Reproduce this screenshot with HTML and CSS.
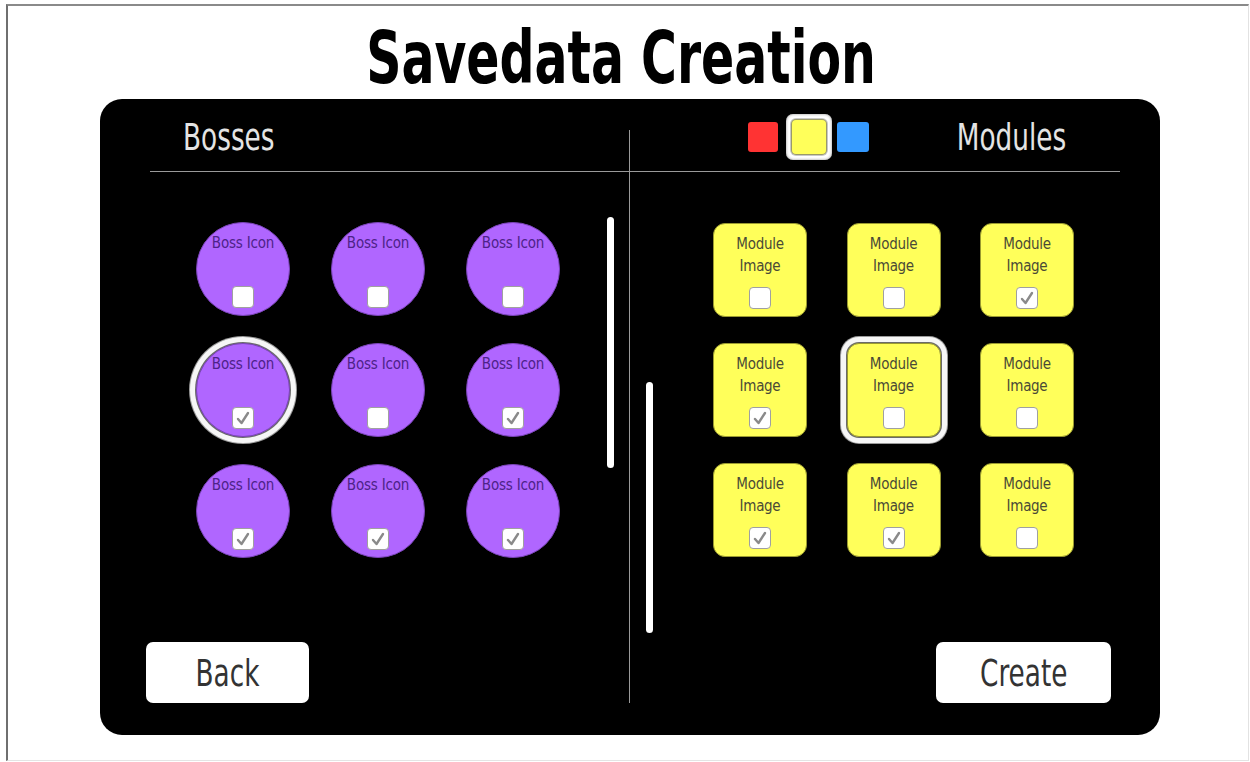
FILE: index.html
```html
<!DOCTYPE html>
<html>
<head>
  <title>Savedata Creation</title>
  <link rel="stylesheet" href="styles.css">
</head>
<body>
  <div class="frame">
    <h1><span class="narrow title-text">Savedata Creation</span></h1>

    <div class="panel">
      <!-- Bosses column -->
      <div class="column column-left">
        <div class="column-head head-left">
          <span class="head-label narrow">Bosses</span>
        </div>
        <div class="column-body">
          <div class="boss-grid">
            <div class="boss"><span class="boss-label">Boss Icon</span><span class="check"></span></div>
            <div class="boss"><span class="boss-label">Boss Icon</span><span class="check"></span></div>
            <div class="boss"><span class="boss-label">Boss Icon</span><span class="check"></span></div>
            <div class="boss selected"><span class="boss-label">Boss Icon</span><span class="check checked"><svg viewBox="0 0 20 20"><path d="M5 11 L8.5 15 L15 5"/></svg></span></div>
            <div class="boss"><span class="boss-label">Boss Icon</span><span class="check"></span></div>
            <div class="boss"><span class="boss-label">Boss Icon</span><span class="check checked"><svg viewBox="0 0 20 20"><path d="M5 11 L8.5 15 L15 5"/></svg></span></div>
            <div class="boss"><span class="boss-label">Boss Icon</span><span class="check checked"><svg viewBox="0 0 20 20"><path d="M5 11 L8.5 15 L15 5"/></svg></span></div>
            <div class="boss"><span class="boss-label">Boss Icon</span><span class="check checked"><svg viewBox="0 0 20 20"><path d="M5 11 L8.5 15 L15 5"/></svg></span></div>
            <div class="boss"><span class="boss-label">Boss Icon</span><span class="check checked"><svg viewBox="0 0 20 20"><path d="M5 11 L8.5 15 L15 5"/></svg></span></div>
          </div>
          <div class="scrollbar scroll-left"></div>
        </div>
        <div class="column-foot">
          <button class="action back-button"><span class="narrow">Back</span></button>
        </div>
      </div>

      <div class="divider"></div>

      <!-- Modules column -->
      <div class="column column-right">
        <div class="column-head head-right">
          <div class="swatches">
            <span class="swatch red"></span>
            <span class="swatch-wrap"><span class="swatch yellow"></span></span>
            <span class="swatch blue"></span>
          </div>
          <span class="head-label narrow">Modules</span>
        </div>
        <div class="column-body">
          <div class="scrollbar scroll-right"></div>
          <div class="module-grid">
            <div class="module"><span class="module-label">Module<br>Image</span><span class="check"></span></div>
            <div class="module"><span class="module-label">Module<br>Image</span><span class="check"></span></div>
            <div class="module"><span class="module-label">Module<br>Image</span><span class="check checked"><svg viewBox="0 0 20 20"><path d="M5 11 L8.5 15 L15 5"/></svg></span></div>
            <div class="module"><span class="module-label">Module<br>Image</span><span class="check checked"><svg viewBox="0 0 20 20"><path d="M5 11 L8.5 15 L15 5"/></svg></span></div>
            <div class="module selected"><span class="module-label">Module<br>Image</span><span class="check"></span></div>
            <div class="module"><span class="module-label">Module<br>Image</span><span class="check"></span></div>
            <div class="module"><span class="module-label">Module<br>Image</span><span class="check checked"><svg viewBox="0 0 20 20"><path d="M5 11 L8.5 15 L15 5"/></svg></span></div>
            <div class="module"><span class="module-label">Module<br>Image</span><span class="check checked"><svg viewBox="0 0 20 20"><path d="M5 11 L8.5 15 L15 5"/></svg></span></div>
            <div class="module"><span class="module-label">Module<br>Image</span><span class="check"></span></div>
          </div>
        </div>
        <div class="column-foot foot-right">
          <button class="action create-button"><span class="narrow">Create</span></button>
        </div>
      </div>
    </div>
  </div>
</body>
</html>
```

FILE: styles.css
```css
html,
body {
  margin: 0;
  padding: 0;
  background-color: #FFFFFF;
  font-family: "DejaVu Sans Condensed", "DejaVu Sans", sans-serif;
}

.frame {
  box-sizing: border-box;
  width: 1243px;
  height: 757px;
  margin: 4px 0 0 6px;
  border-top: 2px solid #8a8a8a;
  border-left: 2px solid #6f6f6f;
  border-right: 1px solid #e2e2e2;
  border-bottom: 1px solid #e4e4e4;
  display: flex;
  flex-direction: column;
}

/* squeezes the wide fallback font down to the narrow face of the design */
.narrow {
  display: inline-block;
  transform: scaleX(0.77);
}

h1 {
  margin: 0;
  padding-right: 13px;
  height: 93px;
  line-height: 104px;
  text-align: center;
  font-size: 73px;
  font-weight: bold;
  color: #000000;
  white-space: nowrap;
}

.title-text {
  transform: scaleX(0.745);
}

.panel {
  width: 1060px;
  height: 636px;
  margin-left: 92px;
  background-color: #000000;
  border-radius: 22px;
  display: grid;
  grid-template-columns: 529px 1px 530px;
}

.column {
  display: flex;
  flex-direction: column;
}

.column-head {
  box-sizing: border-box;
  height: 73px;
  border-bottom: 1px solid #9a9a9a;
  display: flex;
  align-items: center;
  padding-top: 4px;
}

.head-left {
  margin-left: 50px;
}

.head-left .head-label {
  transform-origin: left center;
  margin-left: 33px;
}

.head-right {
  margin-right: 40px;
}

.head-right .head-label {
  transform-origin: right center;
  margin-left: auto;
  margin-right: 54px;
}

.head-label {
  color: #e4e4e4;
  font-size: 38px;
}

.swatches {
  display: flex;
  align-items: center;
  margin-left: 118px;
}

.swatch {
  display: block;
  width: 30px;
  height: 30px;
  border-radius: 3px;
}

.swatch.red {
  background-color: #ff3333;
}

.swatch.blue {
  width: 32px;
  background-color: #3399ff;
}

.swatch-wrap {
  display: block;
  margin: 0 5px 0 8px;
  padding: 6px;
  background-color: #ffffff;
  border-radius: 7px;
  box-shadow: inset 0 0 3px #8a8a8a;
}

.swatch.yellow {
  width: 34px;
  height: 34px;
  border-radius: 4px;
  background-color: #ffff5a;
  box-shadow: 0 0 0 1px #9a9a6a, 0 0 0 2px #c8c8c8;
}

.column-body {
  display: flex;
  align-items: flex-start;
}

.boss-grid {
  display: grid;
  grid-template-columns: repeat(3, 94px);
  column-gap: 41px;
  row-gap: 27px;
  margin-left: 96px;
  margin-top: 50px;
}

.boss {
  box-sizing: border-box;
  width: 94px;
  height: 94px;
  border-radius: 50%;
  background-color: #b066ff;
  border: 1px solid #7a44b8;
  display: flex;
  flex-direction: column;
  align-items: center;
  padding-top: 11px;
}

.boss.selected,
.module.selected {
  box-shadow: 0 0 0 1px #6a6a6a, 0 0 0 6px #f6f6f6, 0 0 0 7px #9a9a9a;
}

.boss-label {
  font-size: 15px;
  line-height: 18px;
  color: #4d2288;
  letter-spacing: -0.2px;
}

.check {
  box-sizing: border-box;
  display: block;
  width: 22px;
  height: 22px;
  background-color: #ffffff;
  border: 1px solid #a0a0a0;
  border-radius: 4px;
}

.boss .check {
  margin-top: 34px;
}

.check svg {
  display: block;
  width: 20px;
  height: 20px;
}

.check svg path {
  fill: none;
  stroke: #8a8a8a;
  stroke-width: 2.4;
  stroke-linecap: round;
  stroke-linejoin: round;
}

.scrollbar {
  width: 7px;
  height: 251px;
  background-color: #ffffff;
  border-radius: 4px;
}

.scroll-left {
  margin-left: auto;
  margin-right: 15px;
  margin-top: 45px;
}

.scroll-right {
  margin-left: 16px;
  margin-top: 210px;
}

.module-grid {
  display: grid;
  grid-template-columns: repeat(3, 94px);
  column-gap: 39.5px;
  row-gap: 26px;
  margin-left: 60px;
  margin-top: 51px;
}

.module {
  box-sizing: border-box;
  width: 94px;
  height: 94px;
  border-radius: 12px;
  background-color: #ffff5a;
  border: 1px solid #9a9a30;
  display: flex;
  flex-direction: column;
  align-items: center;
  padding-top: 9px;
}

.module-label {
  font-size: 15px;
  line-height: 22px;
  text-align: center;
  color: #4a4a36;
  letter-spacing: -0.3px;
}

.module .check {
  margin-top: 10px;
}

.column-foot {
  margin-top: auto;
  padding-bottom: 32px;
  display: flex;
}

.foot-right {
  justify-content: flex-end;
}

.action {
  height: 61px;
  padding: 0;
  border: none;
  border-radius: 7px;
  background-color: #ffffff;
  color: #333333;
  font-family: "DejaVu Sans Condensed", "DejaVu Sans", sans-serif;
  font-size: 38px;
  cursor: pointer;
}

.back-button {
  width: 163px;
  margin-left: 46px;
}

.create-button {
  width: 175px;
  margin-right: 49px;
}

.divider {
  background-color: #9a9a9a;
  margin: 31px 0 32px 0;
}
```
